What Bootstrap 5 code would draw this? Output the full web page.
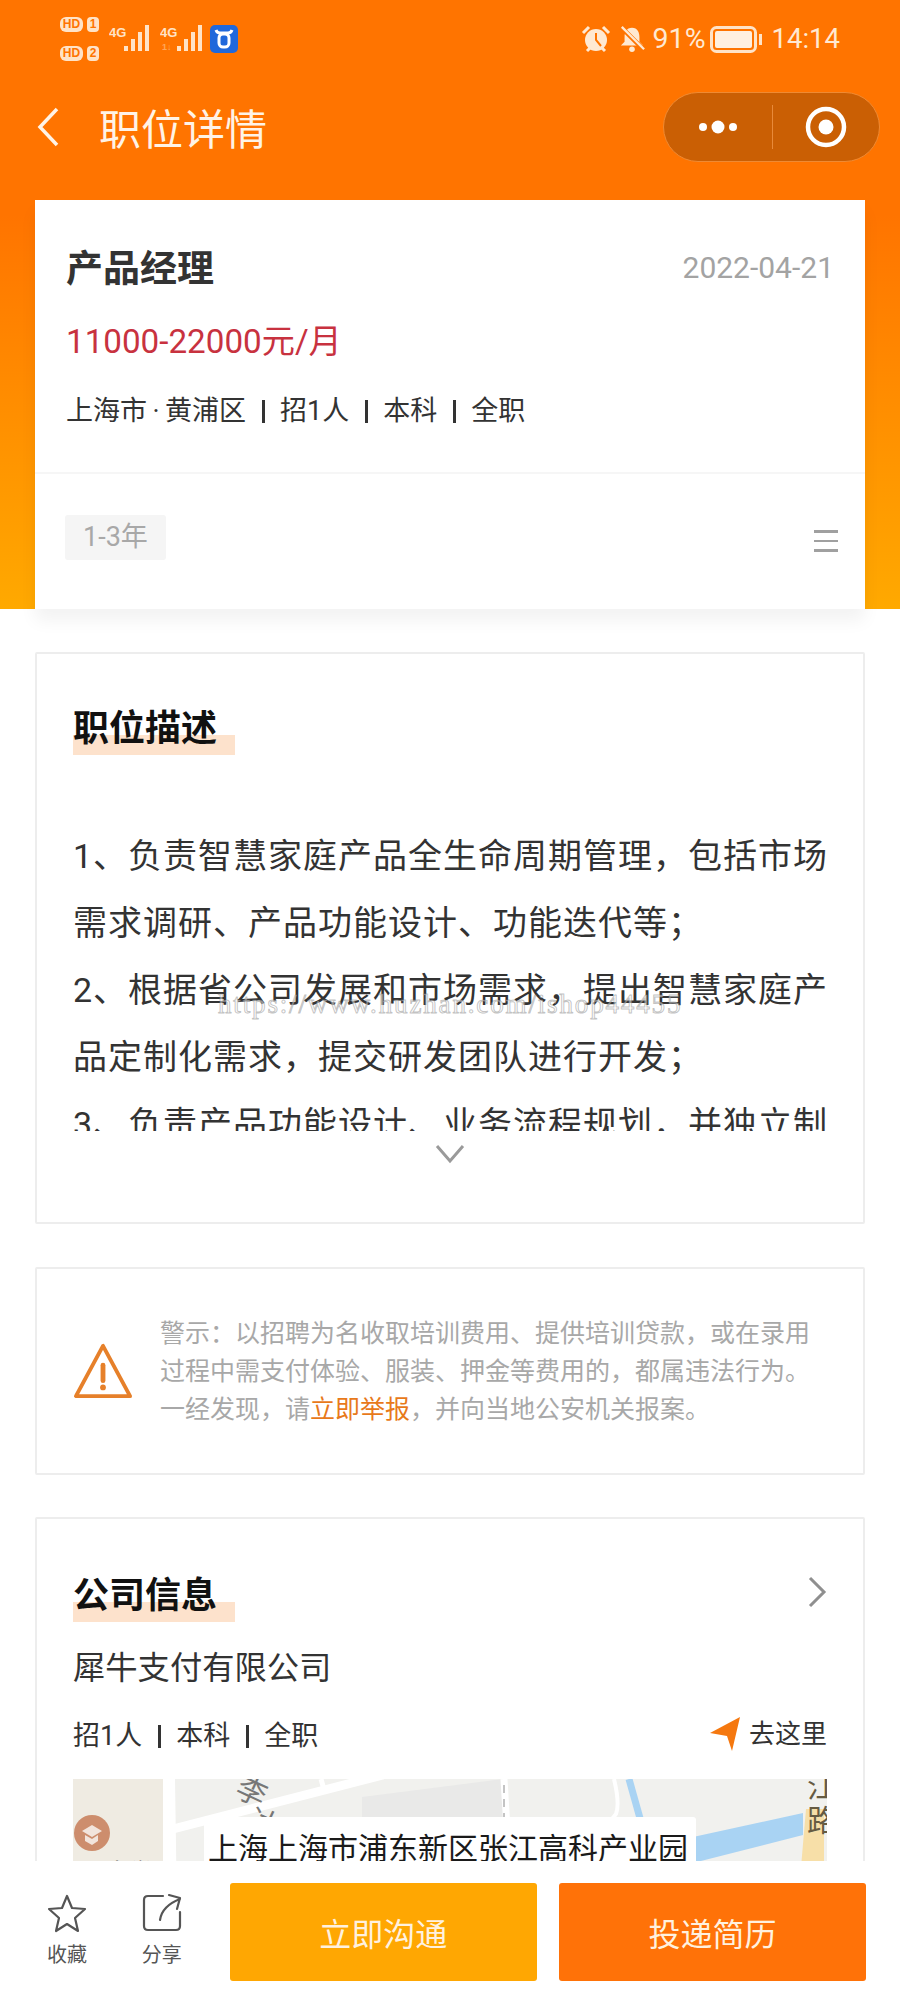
<!DOCTYPE html>
<html lang="zh">
<head>
<meta charset="utf-8">
<link rel="stylesheet" href="https://cdn.jsdelivr.net/npm/bootstrap@5.3.0/dist/css/bootstrap.min.css">
<style>
html,body{height:2000px;overflow:hidden}
body{font-family:"Noto Sans CJK SC","Noto Sans",sans-serif;background:#fff;color:#333}
.screen{width:900px;height:2000px;position:relative;overflow:hidden;background:#fff}
.hero{height:609px;background:linear-gradient(180deg,#ff7400 0,#ff7400 215px,#ffa900 609px)}
.statusbar{height:67px;padding:17px 60px 0 60px;color:#ffe9d2}
.hd-col{display:flex;flex-direction:column;gap:14px;margin-right:10px}
.hd-chip{display:flex;gap:4px}
.hd-box{font:700 12px/15px "Liberation Sans",sans-serif;background:#ffe3c7;color:#ff7400;border-radius:4px;height:15px;min-width:12px;padding:0 1px;text-align:center}
.hd-box.wide{width:23px;border-radius:6px}
.sig{margin-top:8px;flex-shrink:0}
.sig1{margin-right:9px}
.sig2{margin-right:8px}
.appico{width:28px;height:28px;border-radius:5px;background:#2068db;margin-top:8px}
.st-right{height:44px}
.st-txt{font:400 27.5px/1 Roboto,sans-serif;color:#ffe9d2}
.st-pct{font-size:28.5px}
.navrow{height:120px;margin-bottom:13px;padding:0 20px 0 36px}
.nav-title{font-size:42px;line-height:1;color:#fff3e6;margin-left:39px;font-weight:400}
.capsule{width:217px;height:70px;border-radius:36px;background:#ca5f04;border:1px solid #ef8a33}
.capsule-l{width:108px;height:100%}
.capsule-sep{width:1px;height:44px;background:#e88a3a}
.capsule-r{flex:1;height:100%}
.jobcard{margin:0 35px;height:409px;background:#fff;box-shadow:0 12px 16px rgba(0,0,0,.05);position:relative}
.jobmain{height:274px;padding:46px 31px 0 31px;border-bottom:2px solid #f6f6f6}
.jobtitle{font-size:37px;line-height:44px;font-weight:700;color:#333;margin:-2px 0 0}
.jobdate{font:400 30px/44px Roboto,sans-serif;color:#a3a3a3}
.salary{font-size:33.2px;line-height:40px;color:#c8323f;margin-top:32px;font-family:Roboto,"Noto Sans CJK SC",sans-serif}
.metaline{font-size:27px;line-height:36px;color:#333;margin-top:31px;font-family:Roboto,"Noto Sans CJK SC",sans-serif}
.vbar{display:inline-block;width:3px;height:23px;background:#333;margin:0 15.5px;vertical-align:-3px}
.expr{padding:41px 31px 0 30px}
.yrtag{background:#f5f5f5;color:#a8a8a8;font-size:27px;line-height:44px;height:45px;padding:0 18px;font-family:Roboto,"Noto Sans CJK SC",sans-serif;border-radius:3px}
.hamb{width:24px;margin-top:15px;margin-right:-4px}
.hamb i{display:block;height:2.5px;background:#a0a0a0;margin-bottom:7px}
.panel{margin:0 35px;border:2px solid #ededed;background:#fff;border-radius:2px}
.p-desc{margin-top:43px;height:572px;padding:46px 36px 0 36px;position:relative}
.ttl{position:relative;display:inline-block;width:162px;font-size:36px;line-height:50px;font-weight:700;color:#111;z-index:0}
.ttl::after{content:"";position:absolute;left:0;right:0;bottom:-5px;height:20px;background:#fde2cc;z-index:-1}
.desc{margin-top:73px;margin-right:-6px;height:308px;overflow:hidden;font-size:34px;line-height:67px;letter-spacing:1px;color:#333;font-family:Roboto,"Noto Sans CJK SC",sans-serif}
.chev{position:absolute;left:50%;margin-left:-15px;top:490px}
.wm{position:absolute;left:181px;top:337px;font:400 27px/1 "Liberation Serif",serif;color:rgba(255,255,255,.5);-webkit-text-stroke:1px rgba(120,120,120,.45);letter-spacing:1.85px;white-space:nowrap}
.p-warn{margin-top:43px;height:208px;padding:0 36px;color:#a8a8a8}
.warntxt{font-size:25px;line-height:38px;margin-left:27px;margin-top:-4px}
.warntxt b{font-weight:400;color:#e8791a}
.p-co{margin-top:42px;height:500px;padding:48px 36px 0 36px}
.coname{font-size:32.3px;line-height:40px;color:#333;margin-top:28px}
.cometa{font-size:27px;line-height:36px;color:#333;margin-top:33px;font-family:Roboto,"Noto Sans CJK SC",sans-serif}
.goto{font-size:26px;color:#333;line-height:36px;margin-top:-4px}
.mapbox{margin-top:25px;height:200px;background:#f1f1ee;position:relative;overflow:hidden}
.map-svg{position:absolute;left:0;top:0}
.addr{position:absolute;left:131px;top:38px;background:#fff;width:492px;height:66px;padding:5px 4px;font-size:30px;line-height:48px;color:#1a1a1a;white-space:nowrap;border-radius:3px}
.bottombar{position:absolute;left:0;right:0;top:1861px;height:139px;background:#fff;padding:22px 34px 0 45px}
.act{width:44px;margin-right:51px;margin-top:10px;text-align:center;font-size:20px;line-height:26px;color:#555}
.act span{display:block;white-space:nowrap;margin-top:8px;margin-left:-4px;margin-right:-4px}
.btnx{width:308px;height:98px;border:0;border-radius:3px;color:#fff1df;font-size:32px;line-height:98px;text-align:center}
.bx1{background:#ffa702;margin-right:22px;margin-left:-5px}
.bx2{background:#ff7208}
</style>
</head>
<body>
<div class="screen">
  <div class="hero">
    <div class="statusbar d-flex align-items-start">
      <div class="hd-col">
        <div class="hd-chip"><span class="hd-box wide">HD</span><span class="hd-box">1</span></div>
        <div class="hd-chip"><span class="hd-box wide">HD</span><span class="hd-box">2</span></div>
      </div>
      <svg class="sig sig1" width="42" height="28" viewBox="0 0 42 28" fill="#ffe3c7"><text x="0" y="12" font-size="13" font-weight="700" font-family="Liberation Sans">4G</text><rect x="15" y="21" width="4" height="5"/><rect x="22" y="14" width="4" height="12"/><rect x="29" y="7" width="4" height="19"/><rect x="36" y="0" width="4" height="26"/></svg>
      <svg class="sig sig2" width="42" height="28" viewBox="0 0 42 28" fill="#ffe3c7"><text x="0" y="12" font-size="13" font-weight="700" font-family="Liberation Sans">4G</text><text x="2" y="25" font-size="9" font-weight="700" font-family="Liberation Sans" opacity=".45">1↓</text><rect x="17" y="21" width="4" height="5"/><rect x="24" y="14" width="4" height="12"/><rect x="31" y="7" width="4" height="19"/><rect x="38" y="0" width="4" height="26"/></svg>
      <div class="appico d-flex align-items-center justify-content-center"><svg width="20" height="20" viewBox="0 0 20 20" fill="none" stroke="#fff" stroke-width="3"><path d="M2 1q1 3 4 3h8q3 0 4-3"/><rect x="5" y="5" width="10" height="13" rx="4"/></svg></div>
      <div class="st-right ms-auto d-flex align-items-center">
        <svg width="30" height="30" viewBox="0 0 30 30"><circle cx="15" cy="16" r="11" fill="#ffe9d2"/><path d="M15 9v7l5 6" stroke="#ff7400" stroke-width="2" fill="none"/><path d="M2 9l6-6M28 9l-6-6M6 27l3-3M24 27l-3-3" stroke="#ffe9d2" stroke-width="3"/></svg>
        <svg width="26" height="28" viewBox="0 0 28 30" class="ms-2"><path d="M14 3c-6 0-8 5-8 10v5l-4 4h24l-4-4v-5c0-5-2-10-8-10z" fill="#ffe9d2"/><circle cx="14" cy="26" r="3" fill="#ffe9d2"/><path d="M2 2l24 24" stroke="#ff7400" stroke-width="5"/><path d="M3 2l24 24" stroke="#ffe9d2" stroke-width="2.5"/></svg>
        <span class="st-txt st-pct ms-2">91%</span>
        <svg width="54" height="27" viewBox="0 0 54 27" class="ms-1"><rect x="1.5" y="1.5" width="44" height="24" rx="5" fill="none" stroke="#ffe3c7" stroke-width="3"/><rect x="5" y="5" width="37" height="17" rx="2" fill="#fff0e0"/><rect x="49" y="8" width="3" height="11" fill="#ffe3c7"/></svg>
        <span class="st-txt ms-2">14:14</span>
      </div>
    </div>
    <div class="navrow d-flex align-items-center">
      <svg width="24" height="40" viewBox="0 0 24 40" fill="none" stroke="#fff3e6" stroke-width="3.5"><path d="M21 2L4 20l17 18"/></svg>
      <div class="nav-title">职位详情</div>
      <div class="capsule ms-auto d-flex align-items-center">
        <div class="capsule-l d-flex align-items-center justify-content-center">
          <svg width="44" height="16" viewBox="0 0 44 16" fill="#fff"><circle cx="7" cy="8" r="4"/><circle cx="22" cy="8" r="6.5"/><circle cx="37" cy="8" r="4"/></svg>
        </div>
        <div class="capsule-sep"></div>
        <div class="capsule-r d-flex align-items-center justify-content-center">
          <svg width="42" height="42" viewBox="0 0 42 42"><circle cx="21" cy="21" r="18" fill="none" stroke="#fff" stroke-width="4.5"/><circle cx="21" cy="21" r="7.5" fill="#fff"/></svg>
        </div>
      </div>
    </div>
    <div class="jobcard">
      <div class="jobmain">
        <div class="d-flex justify-content-between align-items-start">
          <h1 class="jobtitle">产品经理</h1>
          <div class="jobdate">2022-04-21</div>
        </div>
        <div class="salary">11000-22000元/月</div>
        <div class="metaline">上海市&#8201;·&#8201;黄浦区<i class="vbar"></i>招1人<i class="vbar"></i>本科<i class="vbar"></i>全职</div>
      </div>
      <div class="expr d-flex justify-content-between align-items-start">
        <div class="yrtag">1-3年</div>
        <div class="hamb"><i></i><i></i><i></i></div>
      </div>
    </div>
  </div>

  <section class="panel p-desc">
    <div class="ttl">职位描述</div>
    <div class="desc">1、负责智慧家庭产品全生命周期管理，包括市场需求调研、产品功能设计、功能迭代等；<br>2、根据省公司发展和市场需求，提出智慧家庭产品定制化需求，提交研发团队进行开发；<br>3、负责产品功能设计、业务流程规划，并独立制定产品方案；</div>
    <svg class="chev" width="30" height="20" viewBox="0 0 30 20" fill="none" stroke="#9a9a9a" stroke-width="3"><path d="M2 2l13 15L28 2"/></svg>
    <div class="wm">https://www.huzhan.com/ishop44455</div>
  </section>

  <section class="panel p-warn d-flex align-items-center">
    <svg width="60" height="58" viewBox="0 0 62 60" fill="none" class="flex-shrink-0"><path d="M31 4L3 56h56z" stroke="#e6802a" stroke-width="4" stroke-linejoin="round"/><path d="M31 24v16" stroke="#e6802a" stroke-width="5" stroke-linecap="round"/><circle cx="31" cy="47" r="3" fill="#e6802a"/></svg>
    <div class="warntxt">警示：以招聘为名收取培训费用、提供培训贷款，或在录用过程中需支付体验、服装、押金等费用的，都属违法行为。一经发现，请<b>立即举报</b>，并向当地公安机关报案。</div>
  </section>

  <section class="panel p-co">
    <div class="d-flex justify-content-between align-items-center">
      <div class="ttl">公司信息</div>
      <svg width="20" height="32" viewBox="0 0 20 32" fill="none" stroke="#8f8f8f" stroke-width="3"><path d="M3 2l14 14L3 30"/></svg>
    </div>
    <div class="coname">犀牛支付有限公司</div>
    <div class="cometa d-flex justify-content-between align-items-center">
      <div>招1人<i class="vbar"></i>本科<i class="vbar"></i>全职</div>
      <div class="goto d-flex align-items-center"><svg width="32" height="36" viewBox="0 0 32 36" class="me-2"><path d="M1 17L31 1 23 35 18 20z" fill="#f5780f"/></svg>去这里</div>
    </div>
    <div class="mapbox">
      <svg class="map-svg" width="757" height="200" viewBox="0 0 757 200">
        <rect width="90" height="200" fill="#efebe2"/>
        <path d="M90 0h12l3 200h-15z" fill="#fff"/>
        <path d="M289 18L430 0v60H289z" fill="#e9e9e8"/>
        <path d="M100 50L310 -4" stroke="#fff" stroke-width="9"/>
        <path d="M248 0l4 14" stroke="#fff" stroke-width="5"/>
        <path d="M431 0l3 50" stroke="#fff" stroke-width="7"/>
        <path d="M431 6v34" stroke="#c4c4c4" stroke-width="2" stroke-dasharray="8 6"/>
        <path d="M541 0q6 25 2 35l-16 20" stroke="#fff" stroke-width="4" fill="none"/>
        <path d="M556 0l14 50" stroke="#a9d3f3" stroke-width="7"/>
        <path d="M620 58L730 34v22L620 84z" fill="#a9d3f3"/>
        <path d="M733 30h18v70h-24z" fill="#f7dfa8"/>
        <circle cx="19" cy="54" r="18" fill="#cd8d6d"/>
        <path d="M9 52l10-6 10 6-10 6zM12 56v6l7 4 6-4v-6l-6 4z" fill="#f2e4dc"/>
        <text x="164" y="24" font-size="30" fill="#777" transform="rotate(25 180 12)" font-family="Noto Sans CJK SC">李</text>
        <text x="176" y="54" font-size="30" fill="#777" transform="rotate(25 190 44)" font-family="Noto Sans CJK SC">冰</text>
        <text x="32" y="102" font-size="24" fill="#555" font-family="Noto Sans CJK SC">大学</text>
        <text x="734" y="18" font-size="30" fill="#665b42" font-family="Noto Sans CJK SC">江</text>
        <text x="734" y="52" font-size="30" fill="#665b42" font-family="Noto Sans CJK SC">路</text>
      </svg>
      <div class="addr">上海上海市浦东新区张江高科产业园</div>
    </div>
  </section>

  <div class="bottombar d-flex align-items-start">
    <div class="act">
      <svg width="40" height="40" viewBox="0 0 40 40" fill="none" stroke="#555" stroke-width="2.2" stroke-linejoin="round"><path d="M20 3l5 12 13 1-10 9 3 13-11-7-11 7 3-13-10-9 13-1z"/></svg>
      <span>收藏</span>
    </div>
    <div class="act">
      <svg width="40" height="40" viewBox="0 0 40 40" fill="none" stroke="#555" stroke-width="2.2" stroke-linecap="round" stroke-linejoin="round"><path d="M21 3H6q-4 0-4 4v26q0 4 4 4h28q4 0 4-4V19"/><path d="M18 27q2-14 20-21M27 2l11 3-3 11"/></svg>
      <span>分享</span>
    </div>
    <div class="btnx bx1">立即沟通</div>
    <div class="btnx bx2">投递简历</div>
  </div>
</div>
</body>
</html>
